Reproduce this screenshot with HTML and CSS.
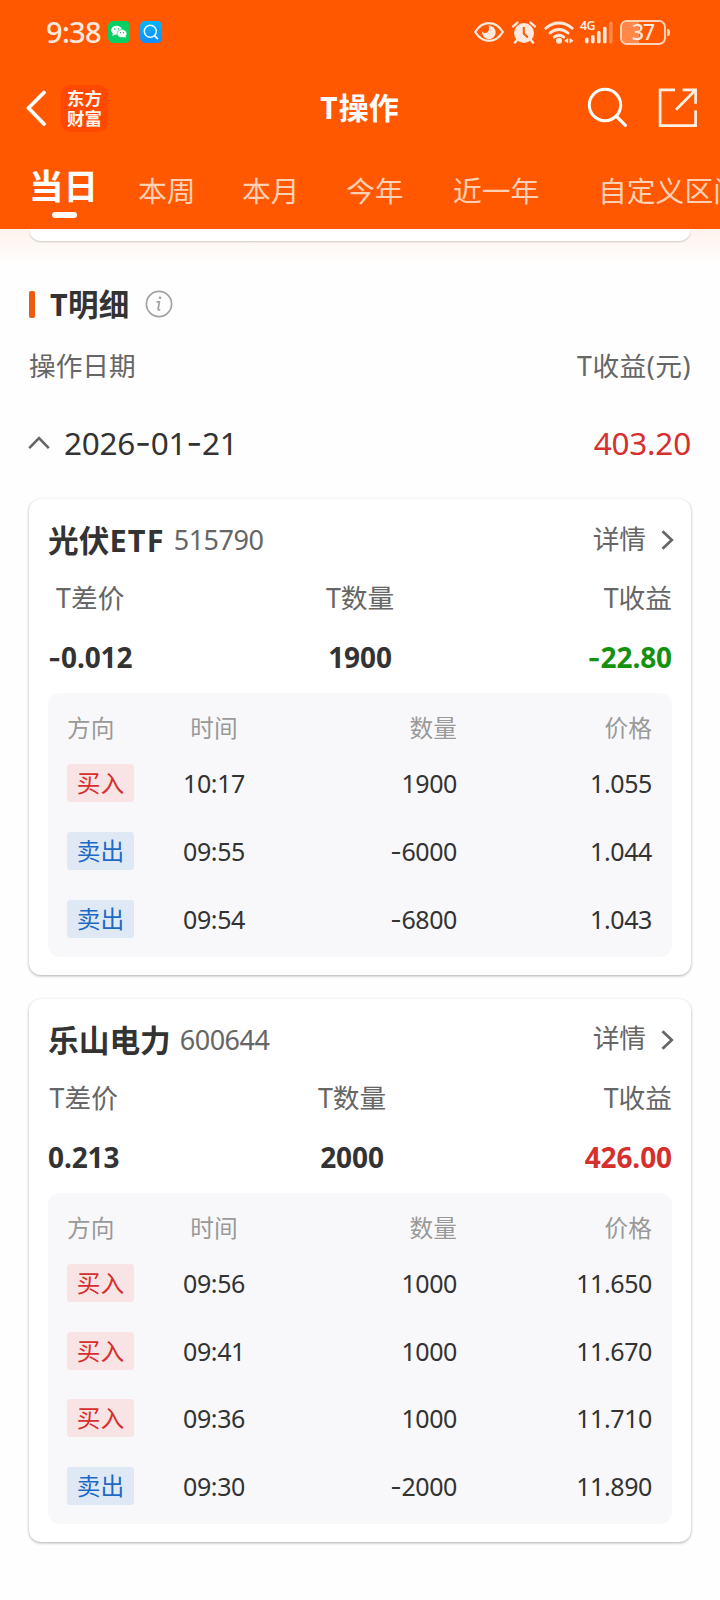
FILE: index.html
```html
<!DOCTYPE html>
<html lang="zh-CN">
<head>
<meta charset="utf-8">
<title>T操作</title>
<link rel="stylesheet" href="styles.css">
</head>
<body>
<header class="header">
  <div class="status">
    <span class="clock">9:38</span>
    <svg class="app-icon wechat" viewBox="0 0 22 22"><rect width="22" height="22" rx="5" fill="#07cf64"/><ellipse cx="8.6" cy="9.2" rx="5.4" ry="4.5" fill="#fff"/><path d="M5 12l-.6 3 3-1.6z" fill="#fff"/><ellipse cx="14" cy="12.6" rx="4.9" ry="4" fill="#fff" stroke="#07cf64" stroke-width=".6"/><path d="M15.500 15.500l2.200 1.600-.3-2.800z" fill="#fff"/><g fill="#07a850"><circle cx="6.800" cy="8" r=".7"/><circle cx="10.400" cy="8" r=".7"/><circle cx="12.400" cy="11.700" r=".6"/><circle cx="15.600" cy="11.700" r=".6"/></g></svg>
    <svg class="app-icon finder" viewBox="0 0 22 22"><defs><linearGradient id="sky" x1="0" y1="0" x2="0" y2="1"><stop offset="0" stop-color="#06b4f8"/><stop offset="1" stop-color="#128cfa"/></linearGradient></defs><rect width="22" height="22" rx="5" fill="url(#sky)"/><circle cx="10.300" cy="10.200" r="6" fill="none" stroke="#e8fbff" stroke-width="1.500"/><path d="M14.600 14.600l2.900 3" stroke="#e8fbff" stroke-width="1.800" stroke-linecap="round"/></svg>
    <div class="indicators">
      <svg class="ind eye" viewBox="0 0 30 20"><path d="M1.200 10C5 4 9.500 1.200 15 1.200S25 4 28.800 10C25 16 20.500 18.800 15 18.800S5 16 1.200 10z" fill="none" stroke="#ffe9de" stroke-width="2.300"/><path d="M14.500 3.600a6.800 6.800 0 1 1-6.300 5.600c1.200 2.100 4.100 2.600 5.600.9 1.600-1.800 1.600-4.400.7-6.500z" fill="#ffe9de"/></svg>
      <svg class="ind alarm" viewBox="0 0 24 23"><circle cx="12" cy="12" r="10" fill="#ffe9de"/><path d="M1.200 5.400L5.400 1.600M22.800 5.400L18.600 1.600M5.500 18.500L3 21.600M18.500 18.500L21 21.600" stroke="#ffe9de" stroke-width="2.400" stroke-linecap="round"/><path d="M11.800 6v6.500l4 4" fill="none" stroke="#ff5800" stroke-width="2"/></svg>
      <svg class="ind wifi" viewBox="0 0 30 23"><g fill="none" stroke="#ffe9de" stroke-width="2.900" stroke-linecap="round"><path d="M1.800 7.200C9.400.2 20.600.2 28.200 7.200"/><path d="M6 12c5.400-4.700 12.600-4.700 18 0"/><path d="M10.200 16.200c2.900-2.300 6.700-2.300 9.600 0"/></g><circle cx="15" cy="19.800" r="3" fill="#ffe9de"/><path d="M20.200 19.800l4-2.800v5.600zM29.600 19.800l-4-2.800v5.600z" fill="#ffe9de"/></svg>
      <div class="cell">
        <svg class="ind bars" viewBox="0 0 33 23"><g stroke="#ffe9de" stroke-width="3.600" stroke-linecap="round"><path d="M6.800 18.400v2.400M12.800 15.800v5M18.800 11.800v9M24.800 7.600v13.200"/><path d="M30.800 2.200v18.600" opacity=".35"/></g></svg>
        <span class="net">4G</span>
      </div>
      <div class="battery"><span class="level"></span><span class="pct">37</span></div>
      <i class="nub"></i>
    </div>
  </div>
  <div class="navbar">
    <svg class="back" viewBox="0 0 20 36"><path d="M18 2.500L2.500 18 18 34" fill="none" stroke="#fff" stroke-width="3.800" stroke-linecap="round" stroke-linejoin="round"/></svg>
    <div class="brand"><span>东方</span><span>财富</span></div>
    <h1 class="title">T操作</h1>
    <svg class="search" viewBox="0 0 42 42"><circle cx="18" cy="18" r="15.700" fill="none" stroke="#fff" stroke-width="3"/><path d="M29 29l9.400 9.300" stroke="#fff" stroke-width="3.200" stroke-linecap="round"/></svg>
    <svg class="share" viewBox="0 0 40 40"><path d="M17 1.900H2.100v35.700h35.500V22.500M24.500 1.900h13.100v13.900M37.300 2.200L18 21.800" fill="none" stroke="#fff0e4" stroke-width="2.700"/></svg>
  </div>
  <nav class="tabs">
    <a class="tab active">当日</a><a class="tab t2">本周</a><a class="tab t3">本月</a><a class="tab t4">今年</a><a class="tab t5">近一年</a><a class="tab t6">自定义区间</a>
  </nav>
</header>
<main class="page">
  <div class="fade"><div class="prev-card"></div></div>
  <div class="section-title">
    <i class="mark"></i><h2>T明细</h2>
    <svg class="info" viewBox="0 0 28 28"><circle cx="14" cy="14" r="12.600" fill="none" stroke="#a2a2a2" stroke-width="1.700"/><path d="M11.600 11.800h2.800l-1.300 7.200c-.2 1.200.9 1.300 2 .3" fill="none" stroke="#a2a2a2" stroke-width="1.700"/><circle cx="15" cy="7.800" r="1.300" fill="#a2a2a2"/></svg>
  </div>
  <div class="list-head"><span>操作日期</span><span class="wide">T收益(元)</span></div>
  <div class="day">
    <svg class="caret" viewBox="0 0 22 14"><path d="M1.200 12.200L11 2.200l9.800 10" fill="none" stroke="#666" stroke-width="2.600"/></svg>
    <span class="date">2026<b class="hy">-</b>01<b class="hy">-</b>21</span>
    <span class="total">403.20</span>
  </div>

  <section class="card">
    <div class="card-head"><h3>光伏<span class="latin">ETF</span></h3><span class="code">515790</span><span class="more">详情</span><svg class="chev" viewBox="0 0 13 20"><path d="M1.500 1.200L10.800 10l-9.300 8.800" fill="none" stroke="#666" stroke-width="2.700"/></svg></div>
    <div class="stats">
      <div class="stat"><span>T差价</span><strong><b class="hy">-</b>0.012</strong></div>
      <div class="stat"><span>T数量</span><strong>1900</strong></div>
      <div class="stat end"><span>T收益</span><strong class="down"><b class="hy">-</b>22.80</strong></div>
    </div>
    <div class="trades">
      <div class="row head"><span>方向</span><span>时间</span><span>数量</span><span>价格</span></div>
      <div class="row"><span class="tag buy">买入</span><span>10:17</span><span>1900</span><span>1.055</span></div>
      <div class="row"><span class="tag sell">卖出</span><span>09:55</span><span><b class="hy">-</b>6000</span><span>1.044</span></div>
      <div class="row"><span class="tag sell">卖出</span><span>09:54</span><span><b class="hy">-</b>6800</span><span>1.043</span></div>
    </div>
  </section>

  <section class="card">
    <div class="card-head"><h3>乐山电力</h3><span class="code">600644</span><span class="more">详情</span><svg class="chev" viewBox="0 0 13 20"><path d="M1.500 1.200L10.800 10l-9.300 8.800" fill="none" stroke="#666" stroke-width="2.700"/></svg></div>
    <div class="stats">
      <div class="stat"><span>T差价</span><strong>0.213</strong></div>
      <div class="stat"><span>T数量</span><strong>2000</strong></div>
      <div class="stat end"><span>T收益</span><strong class="up">426.00</strong></div>
    </div>
    <div class="trades">
      <div class="row head"><span>方向</span><span>时间</span><span>数量</span><span>价格</span></div>
      <div class="row"><span class="tag buy">买入</span><span>09:56</span><span>1000</span><span>11.650</span></div>
      <div class="row"><span class="tag buy">买入</span><span>09:41</span><span>1000</span><span>11.670</span></div>
      <div class="row"><span class="tag buy">买入</span><span>09:36</span><span>1000</span><span>11.710</span></div>
      <div class="row"><span class="tag sell">卖出</span><span>09:30</span><span><b class="hy">-</b>2000</span><span>11.890</span></div>
    </div>
  </section>
</main>
</body>
</html>
```
FILE: styles.css
```css
* { box-sizing: border-box; }
body {
  margin: 0;
  width: 720px;
  height: 1600px;
  overflow: hidden;
  background: #fefefe;
  color: #333;
  font-family: "Noto Sans", "Noto Sans CJK SC", sans-serif;
}
h1, h2, h3 { margin: 0; }
svg { display: block; flex: none; }
.hy { font-family: Inter, sans-serif; font-weight: inherit; line-height: 1; }

.header { height: 229px; background: #ff5800; overflow: hidden; }
.status { display: flex; align-items: center; height: 64px; padding-left: 46px; color: #ffe9de; }
.clock { width: 62px; font-size: 29px; line-height: 64px; font-weight: 500; letter-spacing: -0.7px; }
.app-icon { width: 22px; height: 22px; }
.finder { margin-left: 10px; }
.indicators { display: flex; align-items: center; margin-left: 312px; }
.eye { width: 30px; height: 20px; }
.alarm { width: 24px; height: 23px; margin-left: 8px; }
.wifi { width: 30px; height: 23px; margin-left: 8px; }
.cell { position: relative; margin-left: 6px; }
.bars { width: 33px; height: 23px; }
.net { position: absolute; left: 0; top: -4px; font: 600 12.500px/18px "Noto Sans", sans-serif; letter-spacing: -0.6px; }
.battery { position: relative; width: 46px; height: 25px; margin-left: 7px; border: 2px solid #ffd3b8; border-radius: 7px; }
.level { position: absolute; left: 0; top: 0; width: 17px; height: 21px; border-radius: 5px 0 0 5px; background: #ff8748; }
.pct { position: relative; display: block; font-size: 21px; line-height: 21px; font-weight: 500; text-align: center; letter-spacing: -1px; }
.nub { width: 3px; height: 7px; margin-left: 1px; border-radius: 0 2px 2px 0; background: #ffd3b8; }

.navbar { display: flex; align-items: center; height: 88px; padding: 0 22px 0 26px; }
.back { width: 20px; height: 36px; }
.brand { display: flex; flex-direction: column; align-items: center; justify-content: center; width: 47px; height: 47px; margin-left: 15px; border-radius: 9px; background: #ff4800; color: #fff4ec; font: 700 17.500px/20px "Noto Sans CJK SC", sans-serif; }
.title { flex: 1; padding-left: 24px; text-align: center; color: #fff; font-size: 30px; line-height: 44px; font-weight: 700; }
.title::first-letter { letter-spacing: 1px; }
.search { width: 42px; height: 42px; }
.share { width: 40px; height: 40px; margin-left: 29px; }

.tabs { display: flex; height: 77px; padding-left: 29px; white-space: nowrap; }
.tab { flex: none; color: #ffd0b3; font-size: 28.800px; line-height: 78px; }
.active { position: relative; width: 109px; color: #fff; font-size: 34.500px; line-height: 68px; font-weight: 700; }
.active::after { content: ""; position: absolute; left: 23px; top: 60px; width: 25px; height: 6px; border-radius: 3px; background: #fffaf2; }
.t2, .t3 { width: 104px; }
.t4 { width: 107px; }
.t5 { width: 145px; }

.fade { height: 36px; padding: 0 29px; background: linear-gradient(#fff3ed, #fefefe); }
.prev-card { height: 12px; background: #fff; border-radius: 0 0 12px 12px; box-shadow: 0 1px 2px rgba(0, 0, 0, .2); }

.section-title { display: flex; align-items: center; height: 78px; padding-left: 29px; }
.mark { width: 6px; height: 27px; border-radius: 2px; background: #ee5a10; }
.section-title h2 { margin-left: 15px; font-size: 30.500px; line-height: 40px; font-weight: 700; letter-spacing: 0.3px; }
.info { width: 28px; height: 28px; margin-left: 15px; }
.list-head { display: flex; justify-content: space-between; height: 46px; padding: 0 29px; color: #666; font-size: 26.700px; line-height: 46px; }
.wide { letter-spacing: 0.5px; }
.day { display: flex; align-items: center; height: 110px; padding: 0 29px 2px 28px; font-size: 31.500px; line-height: 60px; }
.caret { width: 22px; height: 14px; }
.date { margin-left: 14px; letter-spacing: -0.3px; }
.date .hy { font-size: 35px; }
.total { margin-left: auto; color: #d52f2e; letter-spacing: -0.2px; }

.card { margin: 0 29px 24px; padding: 17px 19px 18px; background: #fff; border-radius: 12px; box-shadow: 0 1px 3px rgba(0, 0, 0, .32); }
.card-head { display: flex; align-items: center; height: 48px; }
.card-head h3 { font-size: 30.700px; line-height: 46px; font-weight: 700; }
.latin { letter-spacing: 1.200px; }
.code { margin-left: 9px; color: #666; font-size: 27px; line-height: 46px; letter-spacing: -0.5px; }
.more { margin-left: auto; color: #666; font-size: 26.700px; line-height: 44px; padding-bottom: 3px; }
.chev { width: 13px; height: 20px; margin: 0 -2px 0 15px; }
.stats { display: flex; justify-content: space-between; padding-top: 5px; margin-bottom: 6px; }
.stat { display: flex; flex-direction: column; align-items: center; }
.stat.end { align-items: flex-end; }
.stat span { color: #666; font-size: 26.700px; line-height: 58px; }
.stat strong { margin-top: 1px; font-size: 28px; line-height: 59px; font-weight: 700; letter-spacing: -0.1px; }
.stat strong.down { color: #14910f; }
.stat strong.up { color: #d52f2e; }

.trades { padding: 17px 19px 19px 19px; border-radius: 12px; background: #f8f8fa; }
.row { display: grid; grid-template-columns: 67px 160px 163px 195px; align-items: center; height: 38.400px; margin-top: 29.200px; font-size: 25px; line-height: 38px; letter-spacing: -0.4px; }
.row > span { text-align: right; }
.row > span:nth-child(2) { text-align: center; }
.head { height: 36px; margin-top: 0; color: #999; font-size: 23.700px; line-height: 36px; letter-spacing: 0; }
.row.head > span:first-child { text-align: left; }
.head + .row { margin-top: 18.300px; }
.row > .tag { height: 38px; border-radius: 3px; text-align: center; font-size: 23.700px; line-height: 38px; letter-spacing: 0; }
.buy { background: #f9e4e5; color: #d52f2e; }
.sell { background: #dfe9f6; color: #1d6ac4; }
```
